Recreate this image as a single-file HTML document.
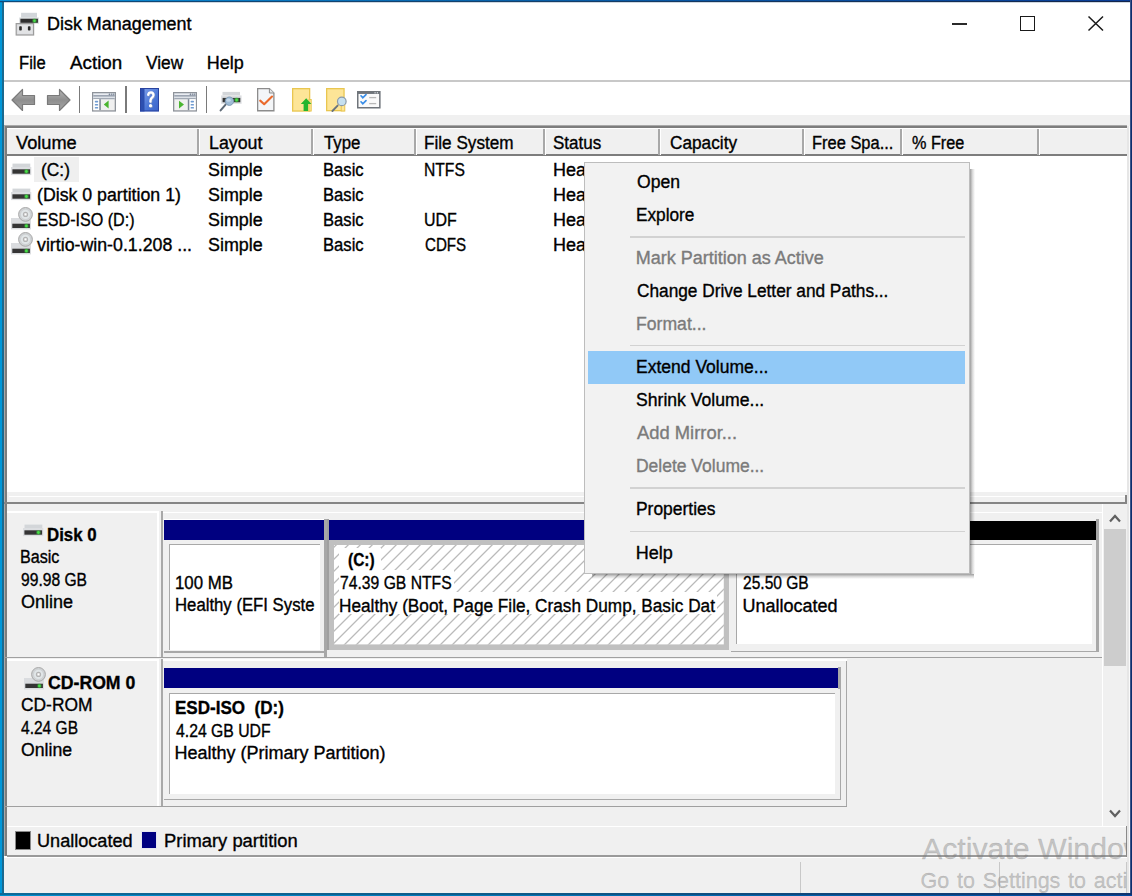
<!DOCTYPE html>
<html><head><meta charset="utf-8">
<style>
*{margin:0;padding:0;box-sizing:border-box}
html,body{width:1132px;height:896px;overflow:hidden;background:#fff}
body{font-family:"Liberation Sans",sans-serif;font-size:18px;color:#000;position:relative}
.a{position:absolute}
.t{position:absolute;white-space:nowrap;line-height:20px;height:20px;-webkit-text-stroke:0.35px currentColor}
.b{font-weight:bold}
.g{color:#7b7b7b}
svg{position:absolute;overflow:visible}
</style></head><body>

<div class="t" style="left:46.50px;top:14px;transform:scaleX(0.9965);transform-origin:0 0;">Disk Management</div>
<svg style="left:15px;top:12px" width="25" height="24" viewBox="0 0 25 24">
<rect x="6.1" y="0.8" width="15.9" height="4.9" fill="#d2d6da"/>
<rect x="4.2" y="5.5" width="19.7" height="6.3" fill="#d8dbde"/>
<rect x="5.4" y="6.75" width="17.5" height="4.05" fill="#2e2e2e"/>
<circle cx="19.5" cy="8.8" r="2.3" fill="#3fd33f" fill-opacity="0.5"/><circle cx="19.5" cy="8.8" r="1.3" fill="#4ae04a"/>
<rect x="1.2" y="11.6" width="17.4" height="11.4" fill="#d6d7d9" stroke="#9c9c9c" stroke-width="1.2"/>
<rect x="2.4" y="12.8" width="15" height="9" fill="#e2e3e5"/>
<rect x="4.2" y="14.3" width="2.6" height="4.3" rx="0.8" fill="#2a2a2a"/>
<rect x="12.9" y="14.3" width="2.6" height="4.3" rx="0.8" fill="#2a2a2a"/></svg>
<div class="a" style="left:952px;top:23.2px;width:15px;height:1.6px;background:#2a2a2a"></div>
<div class="a" style="left:1019.5px;top:16px;width:15px;height:15px;border:1.6px solid #1a1a1a"></div>
<svg style="left:1088px;top:16px" width="16" height="15" viewBox="0 0 16 15">
<path d="M0.5 0.5 L15 14.5 M15 0.5 L0.5 14.5" stroke="#1a1a1a" stroke-width="1.5"/></svg>
<div class="t" style="left:18.58px;top:52.8px;transform:scaleX(0.9214);transform-origin:0 0;">File</div>
<div class="t" style="left:70.30px;top:52.8px;transform:scaleX(1.0449);transform-origin:0 0;">Action</div>
<div class="t" style="left:145.90px;top:52.8px;transform:scaleX(0.9615);transform-origin:0 0;">View</div>
<div class="t" style="left:206.80px;top:52.8px;">Help</div>
<div class="a" style="left:0px;top:80px;width:1132px;height:1.6px;background:#c8c8c8"></div>
<svg style="left:11px;top:88px" width="25" height="24" viewBox="0 0 25 24">
<defs><linearGradient id="ag" x1="0" y1="0" x2="0" y2="1"><stop offset="0" stop-color="#b8b8b8"/><stop offset="0.5" stop-color="#8e8e8e"/><stop offset="1" stop-color="#a8a8a8"/></linearGradient></defs>
<path d="M1 12 L11.5 1.5 L11.5 7.5 L23.5 7.5 L23.5 16.5 L11.5 16.5 L11.5 22.5 Z" fill="url(#ag)" stroke="#7a7a7a" stroke-width="1.2" stroke-linejoin="round"/></svg>
<svg style="left:46px;top:88px" width="25" height="24" viewBox="0 0 25 24">
<path d="M24 12 L13.5 1.5 L13.5 7.5 L1.5 7.5 L1.5 16.5 L13.5 16.5 L13.5 22.5 Z" fill="url(#ag)" stroke="#7a7a7a" stroke-width="1.2" stroke-linejoin="round"/></svg>
<div class="a" style="left:79.2px;top:86px;width:1.3px;height:27px;background:#7a7a7a"></div>
<svg style="left:92.3px;top:92.2px" width="24" height="19.6" viewBox="0 0 24 19.6"><rect x="0.65" y="0.65" width="22.7" height="18.3" fill="#f0f0f0" stroke="#8e939a" stroke-width="1.3"/>
<rect x="1.3" y="1.3" width="21.4" height="5.8" fill="#c9cfd8"/>
<line x1="1.8" y1="2.4" x2="16" y2="2.4" stroke="#eef1f5" stroke-width="1"/>
<rect x="17" y="1.5" width="1" height="1.8" fill="#7f8a9a"/><rect x="19.2" y="1.5" width="1" height="1.8" fill="#7f8a9a"/><rect x="21.2" y="1.5" width="1" height="1.8" fill="#7f8a9a"/>
<line x1="1.3" y1="3.9" x2="22.7" y2="3.9" stroke="#7f8a9a" stroke-width="1"/>
<line x1="1.3" y1="5.3" x2="22.7" y2="5.3" stroke="#e2e6ec" stroke-width="1"/>
<line x1="1.3" y1="6.7" x2="22.7" y2="6.7" stroke="#98a0ac" stroke-width="1"/>
<rect x="1.3" y="7.2" width="6.2" height="10.9" fill="#fff"/>
<rect x="2.8" y="8.8" width="3.4" height="1.6" rx="0.7" fill="#6f9bd2"/><rect x="2.8" y="12" width="3.4" height="1.6" rx="0.7" fill="#6f9bd2"/><rect x="2.8" y="15" width="3.4" height="1.6" rx="0.7" fill="#6f9bd2"/>
<rect x="7.3" y="7.2" width="1.5" height="10.9" fill="#7a8494"/>
<path d="M16.6 8.6 L11.8 12.6 L16.6 16.6 Z" fill="#4ab530"/></svg>
<div class="a" style="left:125.4px;top:86px;width:1.3px;height:27px;background:#7a7a7a"></div>
<svg style="left:140px;top:87.8px" width="19" height="23.4" viewBox="0 0 19 23.4">
<defs><linearGradient id="hg" x1="0" y1="0" x2="1" y2="1"><stop offset="0" stop-color="#86a6ec"/><stop offset="0.6" stop-color="#4a76d6"/><stop offset="1" stop-color="#3a62c8"/></linearGradient></defs>
<rect x="0" y="0" width="19" height="23.4" fill="url(#hg)"/>
<rect x="0" y="0" width="4.5" height="23.4" fill="#2c4fb0"/>
<rect x="0.5" y="0.5" width="18" height="22.4" fill="none" stroke="#2a44a0" stroke-width="1"/>
<path d="M8.2 6.8 Q8.6 4.4 11 4.4 Q13.6 4.6 13.4 7.2 Q13.2 9 11.4 10.2 Q10.4 11 10.4 13.6" fill="none" stroke="#8a9ac0" stroke-width="2.4" stroke-linecap="round" transform="translate(0.6,0.6)"/>
<path d="M8.2 6.8 Q8.6 4.4 11 4.4 Q13.6 4.6 13.4 7.2 Q13.2 9 11.4 10.2 Q10.4 11 10.4 13.6" fill="none" stroke="#fff" stroke-width="2.4" stroke-linecap="round"/>
<circle cx="11" cy="18.2" r="1.8" fill="#8a9ac0"/><circle cx="10.5" cy="17.7" r="1.6" fill="#fff"/></svg>
<svg style="left:173.3px;top:92.2px" width="24" height="19.6" viewBox="0 0 24 19.6"><rect x="0.65" y="0.65" width="22.7" height="18.3" fill="#f0f0f0" stroke="#8e939a" stroke-width="1.3"/>
<rect x="1.3" y="1.3" width="21.4" height="5.8" fill="#c9cfd8"/>
<line x1="1.8" y1="2.4" x2="16" y2="2.4" stroke="#eef1f5" stroke-width="1"/>
<rect x="17" y="1.5" width="1" height="1.8" fill="#7f8a9a"/><rect x="19.2" y="1.5" width="1" height="1.8" fill="#7f8a9a"/><rect x="21.2" y="1.5" width="1" height="1.8" fill="#7f8a9a"/>
<line x1="1.3" y1="3.9" x2="22.7" y2="3.9" stroke="#7f8a9a" stroke-width="1"/>
<line x1="1.3" y1="5.3" x2="22.7" y2="5.3" stroke="#e2e6ec" stroke-width="1"/>
<line x1="1.3" y1="6.7" x2="22.7" y2="6.7" stroke="#98a0ac" stroke-width="1"/>
<rect x="16.3" y="7.2" width="6.4" height="10.9" fill="#fff"/>
<rect x="17.6" y="8.8" width="3.4" height="1.6" rx="0.7" fill="#6f9bd2"/><rect x="17.6" y="12" width="3.4" height="1.6" rx="0.7" fill="#6f9bd2"/><rect x="17.6" y="15" width="3.4" height="1.6" rx="0.7" fill="#6f9bd2"/>
<rect x="14.8" y="7.2" width="1.5" height="10.9" fill="#7a8494"/>
<path d="M6 8.8 L11 12.6 L6 16.4 Z" fill="#4ab530"/></svg>
<div class="a" style="left:206.2px;top:86px;width:1.3px;height:27px;background:#7a7a7a"></div>
<svg style="left:219px;top:90px" width="24" height="22" viewBox="0 0 24 22">
<rect x="3.5" y="1.9" width="17.5" height="3.5" fill="#d3d6d9"/>
<rect x="2.1" y="5.4" width="20.5" height="8.4" fill="#dcdee1"/>
<rect x="3.6" y="7.9" width="17.7" height="4.35" fill="#353535"/>
<circle cx="17.6" cy="10" r="2.4" fill="#3fd33f" fill-opacity="0.5"/><circle cx="17.6" cy="10" r="1.4" fill="#4ae04a"/>
<line x1="6.6" y1="14.6" x2="1.6" y2="20.4" stroke="#5e6a76" stroke-width="2" stroke-linecap="round"/>
<circle cx="10.4" cy="11.2" r="4.2" fill="#9fbcd6" stroke="#7d98b2" stroke-width="0.9"/>
<ellipse cx="9.6" cy="10.2" rx="2.2" ry="1.6" fill="#c4d8ea"/></svg>
<svg style="left:257px;top:88px" width="18" height="24" viewBox="0 0 18 24">
<path d="M0.65 0.65 L12.4 0.65 L16.9 5 L16.9 22.75 L0.65 22.75 Z" fill="#f4f6f8" stroke="#8c8c8c" stroke-width="1.3"/>
<path d="M12.4 0.65 L12.4 5 L16.9 5" fill="#e4e6e8" stroke="#8c8c8c" stroke-width="1"/>
<path d="M3.2 12.6 L7.2 16.2 L15 8.6" fill="none" stroke="#ea6a2c" stroke-width="2.1" stroke-linejoin="round" stroke-linecap="round"/></svg>
<svg style="left:291.5px;top:87.7px" width="20" height="24" viewBox="0 0 20 24">
<rect x="0.65" y="0.65" width="17" height="22.4" fill="#fde597" stroke="#e9c650" stroke-width="1.3"/>
<rect x="17" y="11.5" width="2.2" height="11.5" fill="#fde597" stroke="#e9c650" stroke-width="1"/>
<path d="M14.2 10.2 L19.4 15.9 L16.1 15.9 L16.1 22.9 L11.6 22.9 L11.6 15.9 L8.8 15.9 Z" fill="#23b52f"/></svg>
<svg style="left:325.8px;top:87.8px" width="21" height="24" viewBox="0 0 21 24">
<rect x="0.65" y="0.65" width="17.4" height="22" fill="#fde597" stroke="#e9c650" stroke-width="1.3"/>
<rect x="15.2" y="14" width="3.6" height="9" fill="#fde597" stroke="#e9c650" stroke-width="1"/>
<line x1="11.6" y1="17.6" x2="6.4" y2="23" stroke="#6a747e" stroke-width="1.9" stroke-linecap="round"/>
<circle cx="15.8" cy="13.4" r="4.3" fill="#c6e0ef" stroke="#8a9aa8" stroke-width="1.2"/></svg>
<svg style="left:357.3px;top:90.7px" width="24" height="18" viewBox="0 0 24 18">
<rect x="0.75" y="0.75" width="22.1" height="16" fill="#fafafa" stroke="#6f747a" stroke-width="1.5"/>
<rect x="0.75" y="0.75" width="22.1" height="2.2" fill="#6f747a"/>
<rect x="17.5" y="1" width="1.2" height="1.5" fill="#c8ccd0"/><rect x="19.8" y="1" width="1.2" height="1.5" fill="#c8ccd0"/>
<path d="M4 4.8 L5.8 6.8 L9 3.6" fill="none" stroke="#3a8ee8" stroke-width="1.7" stroke-linecap="round"/>
<path d="M4 10.8 L5.8 12.8 L9 9.6" fill="none" stroke="#3a8ee8" stroke-width="1.7" stroke-linecap="round"/>
<line x1="12.2" y1="6.6" x2="19.2" y2="6.6" stroke="#b8b8b8" stroke-width="1.3"/>
<line x1="12.2" y1="12.6" x2="19.2" y2="12.6" stroke="#b8b8b8" stroke-width="1.3"/></svg>
<div class="a" style="left:0px;top:115px;width:1132px;height:10.5px;background:#f0f0f0"></div>
<div class="a" style="left:3.6px;top:125.3px;width:1123.4px;height:366.7px;background:#fff;border-left:1.3px solid #a9a9a9;border-top:0.5px solid #a9a9a9"></div>
<div class="a" style="left:4.9px;top:125.6px;width:1.9px;height:366.4px;background:#7d7d7d"></div>
<div class="a" style="left:4.9px;top:125.6px;width:1123.5px;height:2.2px;background:#7d7d7d"></div>
<div class="a" style="left:1126.7px;top:127.8px;width:2.1px;height:364.2px;background:#e8e8e8"></div>
<div class="a" style="left:6.8px;top:127.8px;width:1119.9px;height:28.4px;background:#f0f0f0;border-top:1.5px solid #fff;border-bottom:2.5px solid #7d7d7d"></div>
<div class="a" style="left:197px;top:129px;width:2px;height:25.5px;background:#a8a8a8"></div>
<div class="a" style="left:199px;top:129px;width:1px;height:25.5px;background:#fff"></div>
<div class="a" style="left:311px;top:129px;width:2px;height:25.5px;background:#a8a8a8"></div>
<div class="a" style="left:313px;top:129px;width:1px;height:25.5px;background:#fff"></div>
<div class="a" style="left:414px;top:129px;width:2px;height:25.5px;background:#a8a8a8"></div>
<div class="a" style="left:416px;top:129px;width:1px;height:25.5px;background:#fff"></div>
<div class="a" style="left:543px;top:129px;width:2px;height:25.5px;background:#a8a8a8"></div>
<div class="a" style="left:545px;top:129px;width:1px;height:25.5px;background:#fff"></div>
<div class="a" style="left:658px;top:129px;width:2px;height:25.5px;background:#a8a8a8"></div>
<div class="a" style="left:660px;top:129px;width:1px;height:25.5px;background:#fff"></div>
<div class="a" style="left:802px;top:129px;width:2px;height:25.5px;background:#a8a8a8"></div>
<div class="a" style="left:804px;top:129px;width:1px;height:25.5px;background:#fff"></div>
<div class="a" style="left:900px;top:129px;width:2px;height:25.5px;background:#a8a8a8"></div>
<div class="a" style="left:902px;top:129px;width:1px;height:25.5px;background:#fff"></div>
<div class="a" style="left:1036.5px;top:129px;width:2px;height:25.5px;background:#a8a8a8"></div>
<div class="a" style="left:1038.5px;top:129px;width:1px;height:25.5px;background:#fff"></div>
<div class="t" style="left:16.30px;top:133.1px;transform:scaleX(1.0117);transform-origin:0 0;">Volume</div>
<div class="t" style="left:209.01px;top:133.1px;transform:scaleX(0.9887);transform-origin:0 0;">Layout</div>
<div class="t" style="left:324.00px;top:133.1px;transform:scaleX(0.9333);transform-origin:0 0;">Type</div>
<div class="t" style="left:423.95px;top:133.1px;transform:scaleX(0.9522);transform-origin:0 0;">File System</div>
<div class="t" style="left:552.86px;top:133.1px;transform:scaleX(0.9440);transform-origin:0 0;">Status</div>
<div class="t" style="left:669.70px;top:133.1px;transform:scaleX(0.9571);transform-origin:0 0;">Capacity</div>
<div class="t" style="left:811.79px;top:133.1px;transform:scaleX(0.9138);transform-origin:0 0;">Free Spa...</div>
<div class="t" style="left:911.80px;top:133.1px;transform:scaleX(0.9017);transform-origin:0 0;">% Free</div>
<div class="a" style="left:33.8px;top:157.4px;width:45px;height:24.5px;background:#efefef"></div>
<svg style="left:11.4px;top:162.6px" width="21" height="13" viewBox="0 -4 21 13">
<rect x="1.5" y="-3.4" width="17.8" height="3.6" fill="#d3d6d9"/>
<rect x="0" y="0" width="20.3" height="8.1" fill="#dcdee1"/>
<rect x="1.4" y="2.3" width="17.7" height="4.4" fill="#353535"/>
<circle cx="15.4" cy="4.5" r="2.4" fill="#3fd33f" fill-opacity="0.45"/>
<circle cx="15.4" cy="4.5" r="1.4" fill="#46e046"/></svg>
<div class="t" style="left:41.04px;top:159.9px;transform:scaleX(0.9643);transform-origin:0 0;">(C:)</div>
<div class="t" style="left:208.31px;top:159.9px;transform:scaleX(0.9944);transform-origin:0 0;">Simple</div>
<div class="t" style="left:322.68px;top:159.9px;transform:scaleX(0.9233);transform-origin:0 0;">Basic</div>
<div class="t" style="left:424.33px;top:159.9px;transform:scaleX(0.8696);transform-origin:0 0;">NTFS</div>
<div class="t" style="left:553.10px;top:159.9px;">Hea</div>
<svg style="left:11.4px;top:187.76999999999998px" width="21" height="13" viewBox="0 -4 21 13">
<rect x="1.5" y="-3.4" width="17.8" height="3.6" fill="#d3d6d9"/>
<rect x="0" y="0" width="20.3" height="8.1" fill="#dcdee1"/>
<rect x="1.4" y="2.3" width="17.7" height="4.4" fill="#353535"/>
<circle cx="15.4" cy="4.5" r="2.4" fill="#3fd33f" fill-opacity="0.45"/>
<circle cx="15.4" cy="4.5" r="1.4" fill="#46e046"/></svg>
<div class="t" style="left:36.61px;top:185.07px;transform:scaleX(0.9854);transform-origin:0 0;">(Disk 0 partition 1)</div>
<div class="t" style="left:208.31px;top:185.07px;transform:scaleX(0.9944);transform-origin:0 0;">Simple</div>
<div class="t" style="left:322.68px;top:185.07px;transform:scaleX(0.9233);transform-origin:0 0;">Basic</div>
<div class="t" style="left:553.10px;top:185.07px;">Hea</div>
<svg style="left:11.4px;top:206.94px" width="22" height="23" viewBox="0 -11 22 23">
<rect x="0" y="0" width="20" height="11.4" fill="#dadcdf"/>
<rect x="1.3" y="5.7" width="17.6" height="4.3" fill="#353535"/>
<circle cx="15.4" cy="7.9" r="2.3" fill="#3fd33f" fill-opacity="0.45"/>
<circle cx="15.4" cy="7.9" r="1.4" fill="#46e046"/>
<circle cx="14.5" cy="-3.6" r="6.9" fill="#cfd2d4" stroke="#a9a9a9" stroke-width="1"/>
<circle cx="14.5" cy="-3.6" r="4.6" fill="#e1e6e8"/>
<circle cx="14.5" cy="-3.6" r="2.6" fill="#b4b4b4"/>
<rect x="13.4" y="-4.7" width="2.2" height="2.2" fill="#fff"/></svg>
<div class="t" style="left:36.70px;top:210.24px;transform:scaleX(0.8953);transform-origin:0 0;">ESD-ISO (D:)</div>
<div class="t" style="left:208.31px;top:210.24px;transform:scaleX(0.9944);transform-origin:0 0;">Simple</div>
<div class="t" style="left:322.68px;top:210.24px;transform:scaleX(0.9233);transform-origin:0 0;">Basic</div>
<div class="t" style="left:424.31px;top:210.24px;transform:scaleX(0.8861);transform-origin:0 0;">UDF</div>
<div class="t" style="left:553.10px;top:210.24px;">Hea</div>
<svg style="left:11.4px;top:232.11px" width="22" height="23" viewBox="0 -11 22 23">
<rect x="0" y="0" width="20" height="11.4" fill="#dadcdf"/>
<rect x="1.3" y="5.7" width="17.6" height="4.3" fill="#353535"/>
<circle cx="15.4" cy="7.9" r="2.3" fill="#3fd33f" fill-opacity="0.45"/>
<circle cx="15.4" cy="7.9" r="1.4" fill="#46e046"/>
<circle cx="14.5" cy="-3.6" r="6.9" fill="#cfd2d4" stroke="#a9a9a9" stroke-width="1"/>
<circle cx="14.5" cy="-3.6" r="4.6" fill="#e1e6e8"/>
<circle cx="14.5" cy="-3.6" r="2.6" fill="#b4b4b4"/>
<rect x="13.4" y="-4.7" width="2.2" height="2.2" fill="#fff"/></svg>
<div class="t" style="left:37.30px;top:235.41000000000003px;transform:scaleX(0.9872);transform-origin:0 0;">virtio-win-0.1.208 ...</div>
<div class="t" style="left:208.31px;top:235.41000000000003px;transform:scaleX(0.9944);transform-origin:0 0;">Simple</div>
<div class="t" style="left:322.68px;top:235.41000000000003px;transform:scaleX(0.9233);transform-origin:0 0;">Basic</div>
<div class="t" style="left:425.20px;top:235.41000000000003px;transform:scaleX(0.8408);transform-origin:0 0;">CDFS</div>
<div class="t" style="left:553.10px;top:235.41000000000003px;">Hea</div>
<div class="a" style="left:6.3px;top:492px;width:1121px;height:11.6px;background:#f0f0f0"></div>
<div class="a" style="left:3.6px;top:490px;width:1.3px;height:15px;background:#a9a9a9"></div>
<div class="a" style="left:4.9px;top:490px;width:1.9px;height:15px;background:#7d7d7d"></div>
<div class="a" style="left:9px;top:495.5px;width:1116px;height:1.5px;background:#fff"></div>
<div class="a" style="left:4.3px;top:501.5px;width:1122.7px;height:2.2px;background:#858585"></div>
<div class="a" style="left:1125px;top:495.2px;width:2px;height:8.5px;background:#858585"></div>
<div class="a" style="left:4.3px;top:503.7px;width:1122.7px;height:322.5px;background:#f0f0f0"></div>
<div class="a" style="left:3.6px;top:503.7px;width:1.3px;height:352.8px;background:#a9a9a9"></div>
<div class="a" style="left:4.9px;top:503.7px;width:1.9px;height:352.8px;background:#7d7d7d"></div>
<div class="a" style="left:1101.8px;top:503.7px;width:1.4px;height:322.5px;background:#fff"></div>
<div class="a" style="left:1103.5px;top:529px;width:22.5px;height:136.5px;background:#cdcdcd"></div>
<svg style="left:1109px;top:512.5px" width="12" height="10" viewBox="0 0 12 10"><path d="M1 8.5 L6 3 L11 8.5" fill="none" stroke="#606060" stroke-width="2.2"/></svg>
<svg style="left:1109px;top:809px" width="12" height="10" viewBox="0 0 12 10"><path d="M1 1.5 L6 7 L11 1.5" fill="none" stroke="#606060" stroke-width="2.2"/></svg>
<div class="a" style="left:6.9px;top:511px;width:152px;height:146px;background:#f0f0f0;border-top:2px solid #fff"></div>
<div class="a" style="left:156.5px;top:511px;width:2.3px;height:146px;background:#fff"></div>
<div class="a" style="left:161px;top:511px;width:1.8px;height:146px;background:#a8a8a8"></div>
<div class="a" style="left:162.8px;top:511.5px;width:939.0px;height:1.5px;background:#fff"></div>
<div class="a" style="left:4.3px;top:656.5px;width:1097.5px;height:1.7px;background:#a0a0a0"></div>
<div class="a" style="left:164px;top:520px;width:160.3px;height:19.8px;background:#000080"></div>
<div class="a" style="left:164px;top:518.5px;width:160.3px;height:1.5px;background:#fff"></div>
<div class="a" style="left:324.3px;top:518.5px;width:2.5px;height:138.5px;background:#a8a8a8"></div>
<div class="a" style="left:164px;top:650.5px;width:162.8px;height:2px;background:#a8a8a8"></div>
<div class="a" style="left:168.5px;top:544px;width:151.8px;height:106px;background:#fff;border-top:1.6px solid #a8a8a8;border-left:1.6px solid #a8a8a8;"></div>
<div class="a" style="left:328.7px;top:520px;width:395px;height:19.8px;background:#000080"></div>
<div class="a" style="left:326.5px;top:519px;width:2.3px;height:130.6px;background:#a0a0a0"></div>
<div class="a" style="left:328.7px;top:539.8px;width:400px;height:109.8px;background:#c0c0c0"></div>
<svg style="left:333.6px;top:545.3px" width="389.8" height="99.4" viewBox="333.6 545.3 389.8 99.4"><defs><pattern id="hatch" patternUnits="userSpaceOnUse" x="0" y="0" width="12" height="12"><path d="M-1 6 L6 -1 M-1 18 L18 -1 M11 13 L13 11" stroke="#808080" stroke-width="1"/></pattern></defs><rect x="333.6" y="545.3" width="389.8" height="99.4" fill="#fff"/><rect x="333.6" y="545.3" width="389.8" height="99.4" fill="url(#hatch)"/></svg>
<div class="a" style="left:728.7px;top:511px;width:2.2px;height:146px;background:#f0f0f0"></div>
<div class="a" style="left:732px;top:520.7px;width:364.2px;height:19px;background:#000"></div>
<div class="a" style="left:1096.2px;top:519px;width:2.4px;height:133px;background:#a8a8a8"></div>
<div class="a" style="left:730.8px;top:650.5px;width:367.5px;height:1.8px;background:#a8a8a8"></div>
<div class="a" style="left:736px;top:544.3px;width:355.5px;height:100px;background:#fff;border-top:1.6px solid #a8a8a8;border-left:1.6px solid #a8a8a8"></div>
<div class="a" style="left:1091.5px;top:544.3px;width:4.7px;height:106px;background:#f0f0f0"></div>
<svg style="left:23.4px;top:524.4px" width="21" height="13" viewBox="0 -4 21 13">
<rect x="1.5" y="-3.4" width="17.8" height="3.6" fill="#d3d6d9"/>
<rect x="0" y="0" width="20.3" height="8.1" fill="#dcdee1"/>
<rect x="1.4" y="2.3" width="17.7" height="4.4" fill="#353535"/>
<circle cx="15.4" cy="4.5" r="2.4" fill="#3fd33f" fill-opacity="0.45"/>
<circle cx="15.4" cy="4.5" r="1.4" fill="#46e046"/></svg>
<div class="t b" style="left:47.47px;top:524.5px;transform:scaleX(0.9346);transform-origin:0 0;">Disk 0</div>
<div class="t" style="left:20.30px;top:547px;transform:scaleX(0.8953);transform-origin:0 0;">Basic</div>
<div class="t" style="left:21.00px;top:569.5px;transform:scaleX(0.8684);transform-origin:0 0;">99.98 GB</div>
<div class="t" style="left:21.00px;top:592px;">Online</div>
<div class="t" style="left:174.67px;top:572.5px;transform:scaleX(0.9344);transform-origin:0 0;">100 MB</div>
<div class="t" style="left:174.67px;top:595px;transform:scaleX(0.9295);transform-origin:0 0;">Healthy (EFI Syste</div>
<div class="a" style="left:339px;top:547.5px;width:42px;height:22.2px;background:#fff"></div>
<div class="a" style="left:339px;top:569.7px;width:114.5px;height:22.1px;background:#fff"></div>
<div class="a" style="left:339px;top:591.8px;width:378px;height:22.2px;background:#fff"></div>
<div class="t b" style="left:348.40px;top:550.2px;transform:scaleX(0.8581);transform-origin:0 0;">(C:)</div>
<div class="t" style="left:340.10px;top:573px;transform:scaleX(0.8719);transform-origin:0 0;">74.39 GB NTFS</div>
<div class="t" style="left:339.14px;top:595.5px;transform:scaleX(0.9562);transform-origin:0 0;">Healthy (Boot, Page File, Crash Dump, Basic Dat</div>
<div class="t" style="left:743.40px;top:573px;transform:scaleX(0.8645);transform-origin:0 0;">25.50 GB</div>
<div class="t" style="left:742.40px;top:595.5px;">Unallocated</div>
<div class="a" style="left:6.9px;top:658.5px;width:152px;height:147.60000000000002px;background:#f0f0f0;border-top:2px solid #fff"></div>
<div class="a" style="left:156.5px;top:658.5px;width:2.3px;height:147.60000000000002px;background:#fff"></div>
<div class="a" style="left:161px;top:658.5px;width:1.8px;height:147.60000000000002px;background:#a8a8a8"></div>
<div class="a" style="left:162.8px;top:659.0px;width:684.5px;height:1.5px;background:#fff"></div>
<div class="a" style="left:4.3px;top:805.6px;width:842.9000000000001px;height:1.7px;background:#a0a0a0"></div>
<div class="a" style="left:164.3px;top:668.2px;width:674px;height:20px;background:#000080"></div>
<div class="a" style="left:838.3px;top:667px;width:2.7px;height:22px;background:#a8a8a8"></div>
<div class="a" style="left:839.5px;top:688px;width:1.6px;height:112.1px;background:#a8a8a8"></div>
<div class="a" style="left:164.3px;top:798.6px;width:676.8px;height:1.6px;background:#a8a8a8"></div>
<div class="a" style="left:845.6px;top:661px;width:1.6px;height:145.2px;background:#a8a8a8"></div>
<div class="a" style="left:169.3px;top:692.6px;width:665.9px;height:101.4px;background:#fff;border-top:1.6px solid #a8a8a8;border-left:1.6px solid #a8a8a8"></div>
<div class="a" style="left:847.3px;top:658.5px;width:254.5px;height:147.5px;background:#f0f0f0"></div>
<svg style="left:23.7px;top:666.7px" width="22" height="23" viewBox="0 -11 22 23">
<rect x="0" y="0" width="20" height="11.4" fill="#dadcdf"/>
<rect x="1.3" y="5.7" width="17.6" height="4.3" fill="#353535"/>
<circle cx="15.4" cy="7.9" r="2.3" fill="#3fd33f" fill-opacity="0.45"/>
<circle cx="15.4" cy="7.9" r="1.4" fill="#46e046"/>
<circle cx="14.5" cy="-3.6" r="6.9" fill="#cfd2d4" stroke="#a9a9a9" stroke-width="1"/>
<circle cx="14.5" cy="-3.6" r="4.6" fill="#e1e6e8"/>
<circle cx="14.5" cy="-3.6" r="2.6" fill="#b4b4b4"/>
<rect x="13.4" y="-4.7" width="2.2" height="2.2" fill="#fff"/></svg>
<div class="t b" style="left:47.90px;top:672.5px;transform:scaleX(0.9809);transform-origin:0 0;">CD-ROM 0</div>
<div class="t" style="left:21.00px;top:695px;transform:scaleX(0.9658);transform-origin:0 0;">CD-ROM</div>
<div class="t" style="left:21.00px;top:717.5px;transform:scaleX(0.8636);transform-origin:0 0;">4.24 GB</div>
<div class="t" style="left:21.00px;top:740px;transform:scaleX(0.9808);transform-origin:0 0;">Online</div>
<div class="t b" style="left:174.55px;top:697.5px;transform:scaleX(0.9474);transform-origin:0 0;">ESD-ISO&nbsp; (D:)</div>
<div class="t" style="left:175.50px;top:720.8px;transform:scaleX(0.8759);transform-origin:0 0;">4.24 GB UDF</div>
<div class="t" style="left:174.50px;top:743.2px;">Healthy (Primary Partition)</div>
<div class="a" style="left:6.9px;top:826px;width:1120px;height:30.5px;background:#f0f0f0;border-top:1.8px solid #fff;border-bottom:2.4px solid #9a9a9a"></div>
<div class="a" style="left:1125.5px;top:826px;width:1.6px;height:30.5px;background:#8a8a8a"></div>
<div class="a" style="left:14.7px;top:831.2px;width:16.2px;height:18.8px;background:#000;border:0.8px solid #8a8a8a"></div>
<div class="t" style="left:37.49px;top:830.5px;transform:scaleX(1.0054);transform-origin:0 0;">Unallocated</div>
<div class="a" style="left:141px;top:831.2px;width:15.8px;height:18.2px;background:#000080;border:0.6px solid #e8e8f0"></div>
<div class="t" style="left:163.98px;top:830.5px;transform:scaleX(1.0209);transform-origin:0 0;">Primary partition</div>
<div class="a" style="left:4.3px;top:856.5px;width:1123px;height:36.5px;background:#f0f0f0;border-top:1.8px solid #fff"></div>
<div class="a" style="left:799.5px;top:862px;width:1.2px;height:31px;background:#c8c8c8"></div>
<div class="a" style="left:999px;top:862px;width:1.2px;height:31px;background:#c8c8c8"></div>
<div class="a" style="left:1126px;top:862px;width:1.2px;height:31px;background:#c8c8c8"></div>
<div class="t" style="left:922.00px;top:833.5px;font-size:29.5px;line-height:30px;height:30px;color:rgba(120,120,120,0.38);transform:scaleX(1.026);transform-origin:0 0">Activate Windows</div>
<div class="t" style="left:920.50px;top:869px;font-size:21.5px;line-height:24px;height:24px;color:rgba(120,120,120,0.38);word-spacing:1.8px">Go to Settings to activate Windows.</div>
<div class="a" style="left:592px;top:574px;width:382px;height:4.5px;background:linear-gradient(180deg,rgba(0,0,0,0.38),rgba(0,0,0,0.15) 50%,rgba(0,0,0,0))"></div>
<div class="a" style="left:970px;top:169px;width:4.5px;height:405px;background:linear-gradient(90deg,rgba(0,0,0,0.38),rgba(0,0,0,0.15) 50%,rgba(0,0,0,0))"></div>
<div class="a" style="left:584.1px;top:161.9px;width:386.4px;height:412.6px;background:#f2f2f2;border:1.4px solid #bdbdbd"></div>
<div class="a" style="left:587.8px;top:351.1px;width:377.4px;height:32.7px;background:#91c9f7"></div>
<div class="a" style="left:630px;top:236.2px;width:335px;height:1.4px;background:#d2d2d2"></div>
<div class="a" style="left:630px;top:345px;width:335px;height:1.4px;background:#d2d2d2"></div>
<div class="a" style="left:630px;top:487.3px;width:335px;height:1.4px;background:#d2d2d2"></div>
<div class="a" style="left:630px;top:530.6px;width:335px;height:1.4px;background:#d2d2d2"></div>
<div class="t " style="left:636.80px;top:171.8px;transform:scaleX(0.9767);transform-origin:0 0;">Open</div>
<div class="t " style="left:635.84px;top:204.9px;transform:scaleX(0.9567);transform-origin:0 0;">Explore</div>
<div class="t g" style="left:635.80px;top:248px;">Mark Partition as Active</div>
<div class="t " style="left:636.80px;top:281.3px;transform:scaleX(0.9590);transform-origin:0 0;">Change Drive Letter and Paths...</div>
<div class="t g" style="left:635.82px;top:313.5px;transform:scaleX(0.9786);transform-origin:0 0;">Format...</div>
<div class="t " style="left:635.83px;top:357.3px;transform:scaleX(0.9731);transform-origin:0 0;">Extend Volume...</div>
<div class="t " style="left:635.82px;top:390.1px;transform:scaleX(0.9783);transform-origin:0 0;">Shrink Volume...</div>
<div class="t g" style="left:636.80px;top:423.3px;transform:scaleX(1.0206);transform-origin:0 0;">Add Mirror...</div>
<div class="t g" style="left:635.83px;top:456px;transform:scaleX(0.9708);transform-origin:0 0;">Delete Volume...</div>
<div class="t " style="left:635.83px;top:499.4px;transform:scaleX(0.9679);transform-origin:0 0;">Properties</div>
<div class="t " style="left:635.80px;top:543px;">Help</div>
<div class="a" style="left:1127px;top:125.5px;width:2px;height:767.8px;background:#e6e6e6"></div>
<div class="a" style="left:1129px;top:125.5px;width:1px;height:767.8px;background:#fafafa"></div>
<div class="a" style="left:0px;top:0px;width:2.1px;height:896px;background:#0097d9"></div>
<div class="a" style="left:2.1px;top:0px;width:1.5px;height:896px;background:#1a6a90"></div>
<div class="a" style="left:0px;top:0px;width:1132px;height:1.1px;background:linear-gradient(90deg,#0a90d8,#0860a8 45%,#0a3d96)"></div>
<div class="a" style="left:0px;top:1.1px;width:1132px;height:1.1px;background:linear-gradient(90deg,#0d4a7a,#15406a 45%,#14254a)"></div>
<div class="a" style="left:0px;top:2.2px;width:1132px;height:1px;background:linear-gradient(180deg,rgba(20,60,100,0.35),rgba(20,60,100,0.05))"></div>
<div class="a" style="left:1129.8px;top:0px;width:2.2px;height:896px;background:linear-gradient(90deg,#6a80a8,#0d2e6e 50%)"></div>
<div class="a" style="left:0px;top:893.4px;width:1132px;height:1.6px;background:linear-gradient(90deg,#0f6a98,#0f5a88 45%,#10336e)"></div>
<div class="a" style="left:0px;top:895px;width:1132px;height:1px;background:linear-gradient(90deg,#0090d0,#0077b8 45%,#0048a0)"></div>
</body></html>
